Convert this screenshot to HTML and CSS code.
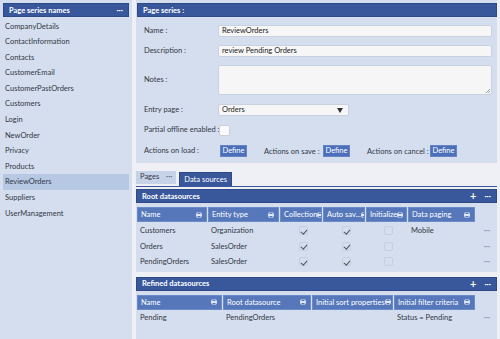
FILE: index.html
```html
<!DOCTYPE html>
<html>
<head>
<meta charset="utf-8">
<link rel="stylesheet" href="styles.css">
</head>
<body>
<div class="app">
  <aside class="side">
    <div class="bar side-bar"><span>Page series names</span><span class="dots">···</span></div>
    <ul class="list">
      <li>CompanyDetails</li>
      <li>ContactInformation</li>
      <li>Contacts</li>
      <li>CustomerEmail</li>
      <li>CustomerPastOrders</li>
      <li>Customers</li>
      <li>Login</li>
      <li>NewOrder</li>
      <li>Privacy</li>
      <li>Products</li>
      <li class="sel">ReviewOrders</li>
      <li>Suppliers</li>
      <li>UserManagement</li>
    </ul>
  </aside>
  <main class="main">
    <section class="top">
      <div class="bar"><span>Page series :</span></div>
      <div class="form">
        <label class="lbl">Name :</label>
        <div class="inp">ReviewOrders</div>
        <label class="lbl">Description :</label>
        <div class="inp">review Pending Orders</div>
        <label class="lbl">Notes :</label>
        <div class="inp notes"><span class="grip"></span></div>
        <label class="lbl">Entry page :</label>
        <div class="inp sel-box"><span>Orders</span><span class="arrow"></span></div>
        <label class="lbl">Partial offline enabled :</label>
        <div><span class="chk-box"></span></div>
        <label class="lbl">Actions on load :</label>
        <div class="actions">
          <span class="btn">Define</span>
          <span class="alb save">Actions on save :</span>
          <span class="btn">Define</span>
          <span class="alb cancel">Actions on cancel :</span>
          <span class="btn">Define</span>
        </div>
      </div>
    </section>
    <div class="tabs">
      <span class="tab">Pages <span class="tdots">···</span></span>
      <span class="tab active">Data sources</span>
    </div>
    <section class="lower">
      <div class="block root">
        <div class="bar"><span>Root datasources</span><span class="icons"><span class="plus">+</span><span class="dots">···</span></span></div>
        <div class="grid g1 head">
          <div class="th">Name<i class="srt"></i></div>
          <div class="th">Entity type<i class="srt"></i></div>
          <div class="th">Collection<i class="srt"></i></div>
          <div class="th">Auto sav...<i class="srt"></i></div>
          <div class="th">Initialize<i class="srt"></i></div>
          <div class="th">Data paging<i class="srt"></i></div>
          <div></div>
        </div>
        <div class="grid g1 row">
          <div>Customers</div><div>Organization</div><div class="c"><span class="cb on"></span></div><div class="c"><span class="cb on"></span></div><div class="c"><span class="cb"></span></div><div>Mobile</div><div class="more">···</div>
        </div>
        <div class="grid g1 row">
          <div>Orders</div><div>SalesOrder</div><div class="c"><span class="cb on"></span></div><div class="c"><span class="cb on"></span></div><div class="c"><span class="cb"></span></div><div></div><div class="more">···</div>
        </div>
        <div class="grid g1 row">
          <div>PendingOrders</div><div>SalesOrder</div><div class="c"><span class="cb on"></span></div><div class="c"><span class="cb on"></span></div><div class="c"><span class="cb"></span></div><div></div><div class="more">···</div>
        </div>
      </div>
      <div class="block refined">
        <div class="bar"><span>Refined datasources</span><span class="icons"><span class="plus">+</span><span class="dots">···</span></span></div>
        <div class="grid g2 head">
          <div class="th">Name<i class="srt"></i></div>
          <div class="th">Root datasource<i class="srt"></i></div>
          <div class="th">Initial sort properties<i class="srt"></i></div>
          <div class="th">Initial filter criteria<i class="srt"></i></div>
          <div></div>
        </div>
        <div class="grid g2 row">
          <div>Pending</div><div>PendingOrders</div><div></div><div>Status = Pending</div><div class="more">···</div>
        </div>
      </div>
    </section>
  </main>
</div>
</body>
</html>
```

FILE: styles.css
```css
* { box-sizing: border-box; }
html, body { margin: 0; padding: 0; }
body {
  width: 500px; height: 339px; overflow: hidden;
  background: #eef0f5;
  font-family: Lato, "Open Sans", sans-serif;
  font-size: 7.5px;
  color: #333844;
  white-space: nowrap;
}
.app { display: flex; height: 339px; }
.side {
  width: 132px; flex: none; background: #d4deef; padding: 3px 3px 0 3px;
}
.bar {
  background: #39589b; color: #fff; height: 14px;
  display: flex; align-items: center; justify-content: space-between;
  padding: 0 5px; font-weight: 700; font-size: 7.5px;
  border: 1px solid #2e4a86;
}
.dots { font-weight: 700; font-size: 8px; }
.list { list-style: none; margin: 1.5px 0 0 0; padding: 0; }
.list li { height: 15.6px; line-height: 15.6px; padding-left: 2px; }
.list li.sel { background: #b7c8e5; }

.main { flex: 1; min-width: 0; margin-left: 4px; margin-right: 3px; display: flex; flex-direction: column; }
.top { background: #d4deef; height: 163px; padding: 3px 0 0 1px; flex: none; }
.form {
  display: grid; grid-template-columns: 74px 274px;
  padding-left: 7px; margin-top: 8px;
  row-gap: 8px; align-items: center;
}
.lbl { line-height: 12px; }
.inp {
  height: 12px; background: #f6f6f7; border: 1px solid #c9d0de; border-radius: 2px;
  padding: 0 3px; line-height: 10px; color: #222;
}
.inp.notes { height: 30px; position: relative; }
.grip { position: absolute; right: 1px; bottom: 1px; width: 4px; height: 4px;
  background: linear-gradient(135deg, transparent 50%, #9aa 50%, #9aa 60%, transparent 60%, transparent 75%, #9aa 75%, #9aa 85%, transparent 85%); }
.sel-box { width: 131px; display: flex; justify-content: space-between; align-items: center; margin-top: 1px; }
.arrow { width: 0; height: 0; border-left: 3.5px solid transparent; border-right: 3.5px solid transparent; border-top: 5px solid #333; margin-right: 2px; }
.chk-box { display: block; width: 11px; height: 11px; background: #fafafa; border: 1px solid #c9d0de; border-radius: 2px; margin-left: 1px; margin-top: 1px; }
.actions { display: flex; align-items: center; margin-left: 2px; margin-top: 1px; }
.btn { background: #4b6fb9; color: #fff; height: 12px; line-height: 10px; width: 27px; text-align: center; border: 1px solid #6684c4; flex: none; }
.alb { margin-left: 17px; flex: none; }
.alb.save { width: 59px; }
.alb.cancel { width: 63px; }

.tabs { height: 23px; display: flex; align-items: flex-end; gap: 3px; flex: none; }
.tab { height: 13px; line-height: 12px; padding: 0 4px; background: #c6d2e8; margin-bottom: 2px; }
.tab .tdots { color: #6b7280; margin-left: 5px; font-weight: 700; }
.tab.active { background: #39589b; color: #fff; height: 14px; line-height: 13px; margin-bottom: 0; padding: 0 4px; border: 1px solid #2e4a86; border-bottom: 0; }
.lower { flex: 1; border-top: 1px solid #39589b; display: flex; flex-direction: column; gap: 5px; padding-top: 2px; }
.block { background: #d4deef; }
.root { padding-bottom: 2px; }
.refined { flex: 1; }
.icons { display: flex; gap: 8px; align-items: center; }
.plus { font-size: 11px; font-weight: 700; line-height: 10px; }
.grid { display: grid; }
.g1 { grid-template-columns: 71px 72px 43px 43px 42px 68px 18px; padding-left: 1px; }
.g2 { grid-template-columns: 86px 89px 82px 82px 18px; padding-left: 1px; }
.head { margin-top: 4px; margin-bottom: 1px; height: 15px; }
.refined .head { margin-bottom: 0; }
.head > div { margin-right: 1px; }
.th { background: #5678bb; color: #fff; display: flex; align-items: center; justify-content: space-between; padding: 0 4px 0 3px; border: 1px solid #6c8bc9; overflow: hidden; }
.srt { display: block; flex: none; width: 6px; height: 6px; border-radius: 50%; background: #dfe7f5; position: relative; }
.srt::before, .srt::after { content: ""; position: absolute; left: 1px; border-left: 2px solid transparent; border-right: 2px solid transparent; }
.srt::before { top: 0; border-bottom: 2.5px solid #5678bb; }
.srt::after { bottom: 0; border-top: 2.5px solid #5678bb; }
.row { height: 15.5px; align-items: center; }
.row > div { padding-left: 3px; }
.c { display: flex; justify-content: center; }
.cb { display: block; width: 9px; height: 9px; border: 1px solid #c5cfe2; border-radius: 2px; position: relative; }
.cb.on::after { content: ""; position: absolute; left: 2px; top: 0.5px; width: 2.5px; height: 5px; border-right: 1px solid #555; border-bottom: 1px solid #555; transform: rotate(40deg); }
.more { color: #8a93a5; font-weight: 700; text-align: right; padding-right: 4px; }
```
